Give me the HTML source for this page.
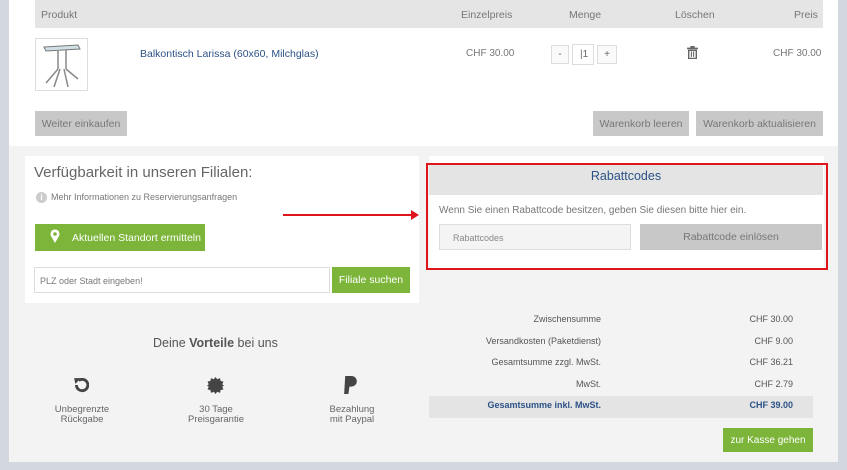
<!DOCTYPE html>
<html><head><meta charset="utf-8"><style>
*{margin:0;padding:0;box-sizing:border-box}
body{width:847px;height:470px;background:#d3d7de;font-family:"Liberation Sans",sans-serif;position:relative;overflow:hidden;color:#666}
.a{position:absolute}
.t{font-size:10px;color:#777}
.btn{position:absolute;background:#c8c8c8;color:#777;font-size:10.5px;display:flex;align-items:center;justify-content:center}
.g{background:#7cb53a;color:#fff}
</style></head><body>
<div class="a" style="left:9px;top:0;width:829px;height:462px;background:#f3f3f3"></div>
<div class="a" style="left:9px;top:0;width:829px;height:146px;background:#fff"></div>
<div class="a" style="left:35px;top:0;width:788px;height:28px;background:#e5e5e5"></div>
<div class="a t" style="left:41px;top:9px;font-size:10.5px">Produkt</div>
<div class="a t" style="left:461px;top:9px;font-size:10.5px">Einzelpreis</div>
<div class="a t" style="left:569px;top:9px;font-size:10.5px">Menge</div>
<div class="a t" style="left:675px;top:9px;font-size:10.5px">Löschen</div>
<div class="a t" style="left:794px;top:9px;font-size:10.5px">Preis</div>
<div class="a" style="left:35px;top:38px;width:53px;height:53px;border:1px solid #ddd;background:#fff">
<svg width="51" height="51" viewBox="0 0 51 51"><path d="M8 8 L42 6 L44 10 L10 12Z" fill="#cfe0e6" stroke="#777"/><path d="M22 12 L22 30 M30 11 L30 30 M22 30 L10 44 M30 30 L42 40 M24 30 L18 48 M28 30 L32 48" stroke="#888" stroke-width="1.5" fill="none"/></svg></div>
<div class="a" style="left:140px;top:48px;font-size:10.5px;color:#2c5286">Balkontisch Larissa (60x60, Milchglas)</div>
<div class="a t" style="left:466px;top:48px">CHF 30.00</div>
<div class="a" style="left:551px;top:45px;width:18px;height:19px;border:1px solid #ddd;font-size:10px;text-align:center;line-height:17px;background:#fafafa">-</div>
<div class="a" style="left:572px;top:44px;width:22px;height:21px;border:1px solid #ddd;font-size:10px;padding-left:7px;line-height:19px;background:#fff">|1</div>
<div class="a" style="left:597px;top:45px;width:20px;height:19px;border:1px solid #ddd;font-size:10px;text-align:center;line-height:17px;background:#fafafa">+</div>
<svg class="a" style="left:687px;top:46px" width="11" height="13" viewBox="0 0 10 12"><rect x="0" y="1.5" width="10" height="1.5" fill="#666"/><rect x="3" y="0" width="4" height="2" fill="#666"/><path d="M1.5 4h7v7.5h-7z" fill="none" stroke="#666" stroke-width="1.3"/><path d="M4 5v5M6 5v5" stroke="#666"/></svg>
<div class="a t" style="left:773px;top:48px">CHF 30.00</div>
<div class="btn" style="left:35px;top:111px;width:92px;height:25px">Weiter einkaufen</div>
<div class="btn" style="left:593px;top:111px;width:96px;height:25px">Warenkorb leeren</div>
<div class="btn" style="left:696px;top:111px;width:127px;height:25px">Warenkorb aktualisieren</div>

<div class="a" style="left:25px;top:156px;width:394px;height:147px;background:#fff"></div>
<div class="a" style="left:34px;top:164px;font-size:15px;color:#666">Verfügbarkeit in unseren Filialen:</div>
<div class="a" style="left:36px;top:192px;width:11px;height:11px;border-radius:50%;background:#ccc;color:#fff;font-size:8px;text-align:center;line-height:11px;font-weight:bold">i</div>
<div class="a" style="left:51px;top:192px;font-size:9px;color:#777">Mehr Informationen zu Reservierungsanfragen</div>
<div class="btn g" style="left:35px;top:224px;width:170px;height:27px;justify-content:flex-start;padding-left:37px">Aktuellen Standort ermitteln</div>
<svg class="a" style="left:50px;top:229px" width="10" height="14" viewBox="0 0 10 14"><path d="M5 14 L1 7 A4.5 4.5 0 1 1 9 7Z" fill="#fff"/><circle cx="5" cy="5" r="1.8" fill="#7cb53a"/></svg>
<div class="a" style="left:34px;top:267px;width:296px;height:26px;border:1px solid #ddd;background:#fff;font-size:9px;color:#777;padding:8px 0 0 5px">PLZ oder Stadt eingeben!</div>
<div class="btn g" style="left:332px;top:267px;width:78px;height:26px">Filiale suchen</div>

<div class="a" style="left:283px;top:214px;width:130px;height:2px;background:#e0151b"></div>
<svg class="a" style="left:411px;top:210px" width="8" height="10"><path d="M0 0L8 5L0 10Z" fill="#e0151b"/></svg>

<div class="a" style="left:429px;top:156px;width:395px;height:113px;background:#fff"></div>
<div class="a" style="left:429px;top:163px;width:394px;height:32px;background:#e4e4e4"></div>
<div class="a" style="left:426px;top:163px;width:402px;height:107px;border:2px solid #e0151b"></div>
<div class="a" style="left:429px;top:169px;width:394px;text-align:center;font-size:12.5px;color:#2c5286">Rabattcodes</div>
<div class="a" style="left:439px;top:205px;font-size:10px;color:#777">Wenn Sie einen Rabattcode besitzen, geben Sie diesen bitte hier ein.</div>
<div class="a" style="left:439px;top:224px;width:192px;height:26px;border:1px solid #ddd;background:#f4f4f4;font-size:9px;color:#888;padding:8px 0 0 13px">Rabattcodes</div>
<div class="btn" style="left:640px;top:224px;width:182px;height:26px">Rabattcode einlösen</div>

<div class="a" style="left:153px;top:336px;font-size:12.5px;color:#555">Deine <b>Vorteile</b> bei uns</div>
<svg class="a" style="left:73px;top:377px" width="16" height="16" viewBox="0 0 14 14"><path d="M3 7 A5 5 0 1 0 5 3" fill="none" stroke="#444" stroke-width="2.5"/><path d="M1 1 L7 1 L2 6Z" fill="#444"/></svg>
<svg class="a" style="left:207px;top:377px" width="17" height="17" viewBox="0 0 15 15"><path d="M7.5 0L9 2 11.5 1 12 3.5 14.5 4 13.5 6.5 15 7.5 13.5 8.5 14.5 11 12 11.5 11.5 14 9 13 7.5 15 6 13 3.5 14 3 11.5 0.5 11 1.5 8.5 0 7.5 1.5 6.5 0.5 4 3 3.5 3.5 1 6 2Z" fill="#444"/></svg>
<svg class="a" style="left:343px;top:376px" width="15" height="18" viewBox="0 0 14 17"><path d="M2 0 H8 A5 5 0 0 1 8 10 H6 L5 17 H1Z" fill="#444"/></svg>
<div class="a" style="left:40px;top:405px;width:84px;text-align:center;font-size:9.5px;line-height:10px;color:#666">Unbegrenzte<br>Rückgabe</div>
<div class="a" style="left:174px;top:405px;width:84px;text-align:center;font-size:9.5px;line-height:10px;color:#666">30 Tage<br>Preisgarantie</div>
<div class="a" style="left:310px;top:405px;width:84px;text-align:center;font-size:9.5px;line-height:10px;color:#666">Bezahlung<br>mit Paypal</div>

<div class="a" style="left:429px;top:396px;width:384px;height:22px;background:#e4e4e4"></div>
<div class="a" style="left:430px;top:309px;width:171px;text-align:right;font-size:9px;line-height:21.6px;color:#555">Zwischensumme<br>Versandkosten (Paketdienst)<br>Gesamtsumme zzgl. MwSt.<br>MwSt.<br><b style="color:#2c5286">Gesamtsumme inkl. MwSt.</b></div>
<div class="a" style="left:700px;top:309px;width:93px;text-align:right;font-size:9px;line-height:21.6px;color:#555">CHF 30.00<br>CHF 9.00<br>CHF 36.21<br>CHF 2.79<br><b style="color:#2c5286">CHF 39.00</b></div>
<div class="btn g" style="left:723px;top:428px;width:90px;height:24px;font-size:10px">zur Kasse gehen</div>
</body></html>
